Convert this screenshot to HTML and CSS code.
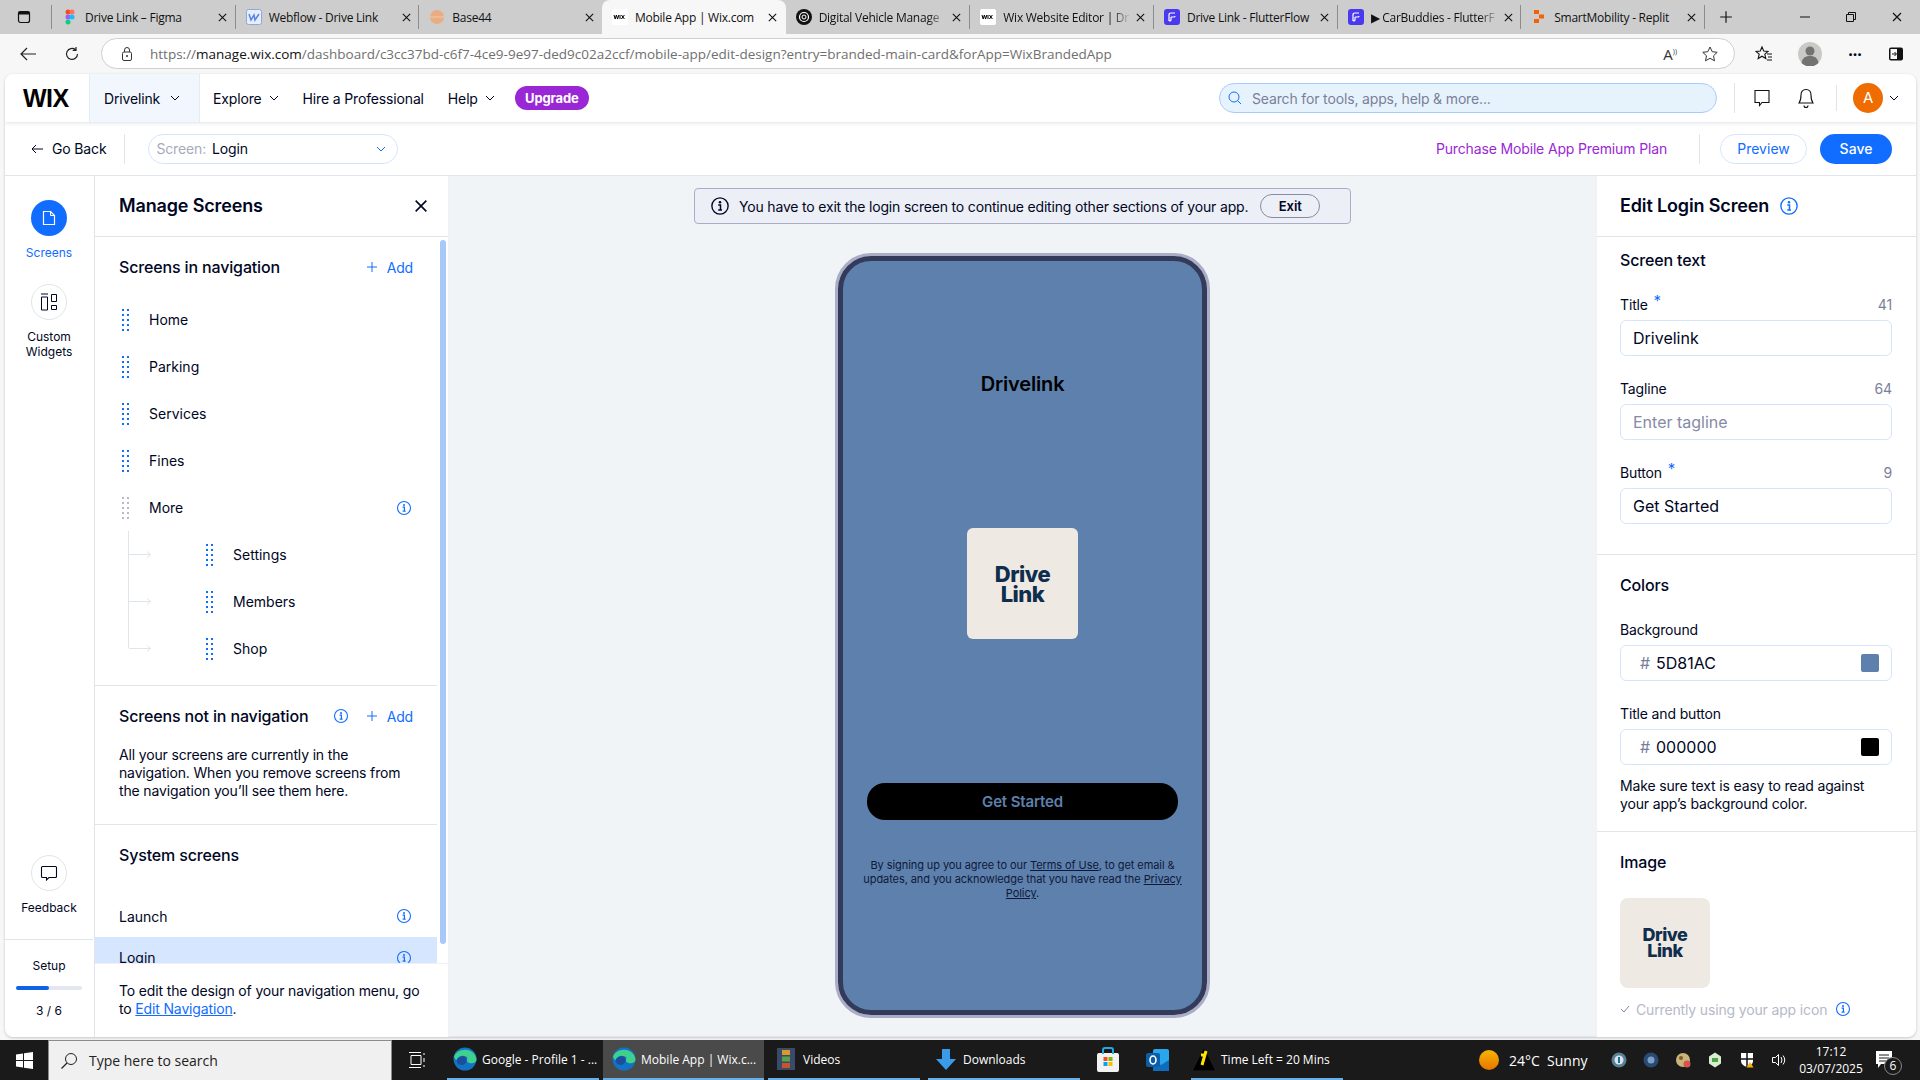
FILE: index.html
```html
<!DOCTYPE html>
<html lang="en">
<head>
    <meta charset="UTF-8">
    <title>Mobile App | Wix.com</title>
    <link rel="stylesheet" href="styles.css">
</head>
<body>

    <!-- Icons used more than once -->
    <svg class="sprite" width="0" height="0">
        <symbol id="i-close" viewBox="0 0 12 12"><path d="M2 2l8 8M10 2l-8 8" fill="none" stroke="currentColor" stroke-width="1.2"/></symbol>
        <symbol id="i-chevron" viewBox="0 0 10 6"><path d="M1 1l4 4 4-4" fill="none" stroke="currentColor" stroke-width="1"/></symbol>
        <symbol id="i-info" viewBox="0 0 16 16"><circle cx="8" cy="8" r="6.5" fill="none" stroke="currentColor" stroke-width="1.1"/><circle cx="8" cy="4.9" r="1" fill="currentColor"/><path d="M6.6 7.2H8.4V11M6.6 11.2H9.6" fill="none" stroke="currentColor" stroke-width="1.2"/></symbol>
        <symbol id="i-plus" viewBox="0 0 12 12"><path d="M6 1v10M1 6h10" fill="none" stroke="currentColor" stroke-width="1"/></symbol>
        <symbol id="i-dots" viewBox="0 0 7 22"><path d="M0 0h2v2H0zM5 0h2v2H5zM0 5h2v2H0zM5 5h2v2H5zM0 10h2v2H0zM5 10h2v2H5zM0 15h2v2H0zM5 15h2v2H5zM0 20h2v2H0zM5 20h2v2H5z" fill="currentColor"/></symbol>
        <symbol id="i-wix" viewBox="0 0 16 16"><rect width="16" height="16" rx="2" fill="#fff"/><path d="M2 6l1.2 4 1.2-4 1.2 4 1.2-4M8 6v4M9.4 6l3 4M12.4 6l-3 4" fill="none" stroke="#000" stroke-width="1"/></symbol>
        <symbol id="i-flutter" viewBox="0 0 16 16"><rect width="16" height="16" rx="3" fill="#4b39ef"/><path d="M5 12V6q0-2 2-2h4M7 8h3q1 0 1-1M7 8v3q0 1-2 1" fill="none" stroke="#fff" stroke-width="1.2"/></symbol>
        <symbol id="i-edge" viewBox="0 0 24 24">
            <circle cx="12" cy="12" r="11.5" fill="#1273c4"/>
            <path d="M1 10C3 1 21 -1 23.5 12c.3 3-3 5-7 4-3-1-3-3-2-5-2-3-8-3-10 1-1 2-2 1-3.500-2z" fill="#3fcf8e"/>
            <path d="M13 11c2 3-1 7-4 7-4 0-6-3-5-6 2-3 7-4 9-1z" fill="#1b4f9c"/>
        </symbol>
    </svg>

    <!-- Browser tabs -->
    <div class="tabstrip">
        <div class="tab-toggle"><svg width="14" height="14" viewBox="0 0 14 14"><rect x="1.500" y="1.500" width="11" height="11" rx="2" fill="none" stroke="#111" stroke-width="1.200"/><rect x="1.500" y="1.500" width="11" height="3" fill="#111"/></svg></div>
        <div class="tab">
            <svg class="favicon" viewBox="0 0 16 16"><circle cx="6" cy="3" r="2.500" fill="#f24e1e"/><circle cx="10" cy="3" r="2.500" fill="#ff7262"/><circle cx="6" cy="8" r="2.500" fill="#a259ff"/><circle cx="10" cy="8" r="2.500" fill="#1abcfe"/><circle cx="6" cy="13" r="2.500" fill="#0acf83"/></svg>
            <span class="tab-title">Drive Link – Figma</span>
            <svg class="tab-close"><use href="#i-close"/></svg>
        </div>
        <div class="tab">
            <svg class="favicon" viewBox="0 0 16 16"><rect x=".5" y=".5" width="15" height="15" rx="2" fill="#e6edfb" stroke="#8fa8dc"/><path d="M3 5l2 6 3-5 1 5 4-6" fill="none" stroke="#5a85e8" stroke-width="1.500"/></svg>
            <span class="tab-title">Webflow - Drive Link</span>
            <svg class="tab-close"><use href="#i-close"/></svg>
        </div>
        <div class="tab">
            <svg class="favicon" viewBox="0 0 16 16"><circle cx="8" cy="8" r="7" fill="#e9ad83"/><path d="M1 8h14" stroke="#f3c9a8"/></svg>
            <span class="tab-title">Base44</span>
            <svg class="tab-close"><use href="#i-close"/></svg>
        </div>
        <div class="tab tab-active">
            <svg class="favicon"><use href="#i-wix"/></svg>
            <span class="tab-title">Mobile App | Wix.com</span>
            <svg class="tab-close"><use href="#i-close"/></svg>
        </div>
        <div class="tab tab-plain">
            <svg class="favicon" viewBox="0 0 16 16"><circle cx="8" cy="8" r="8" fill="#111"/><circle cx="8" cy="8" r="4.500" fill="none" stroke="#fff" stroke-width="1.200"/><circle cx="8" cy="8" r="2" fill="none" stroke="#fff"/></svg>
            <span class="tab-title tab-fade">Digital Vehicle Manage</span>
            <svg class="tab-close"><use href="#i-close"/></svg>
        </div>
        <div class="tab">
            <svg class="favicon"><use href="#i-wix"/></svg>
            <span class="tab-title tab-fade">Wix Website Editor | Dr</span>
            <svg class="tab-close"><use href="#i-close"/></svg>
        </div>
        <div class="tab">
            <svg class="favicon"><use href="#i-flutter"/></svg>
            <span class="tab-title">Drive Link - FlutterFlow</span>
            <svg class="tab-close"><use href="#i-close"/></svg>
        </div>
        <div class="tab">
            <svg class="favicon"><use href="#i-flutter"/></svg>
            <span class="tab-title tab-fade">▶ CarBuddies - FlutterF</span>
            <svg class="tab-close"><use href="#i-close"/></svg>
        </div>
        <div class="tab">
            <svg class="favicon" viewBox="0 0 16 16"><rect x="3" y="1" width="5" height="4" fill="#f26207"/><rect x="8" y="5.500" width="5" height="4" fill="#f26207"/><rect x="3" y="10" width="5" height="4" fill="#f26207"/></svg>
            <span class="tab-title">SmartMobility - Replit</span>
            <svg class="tab-close"><use href="#i-close"/></svg>
        </div>
        <div class="tab-new"><svg width="14" height="14"><use href="#i-plus"/></svg></div>
        <div class="window-btns">
            <svg width="12" height="12" viewBox="0 0 12 12"><path d="M1 6h10" stroke="#111"/></svg>
            <svg width="12" height="12" viewBox="0 0 12 12"><path d="M3.500 3V1.500h7v7H9M1.500 3.500h7v7h-7z" fill="none" stroke="#111"/></svg>
            <svg width="12" height="12"><use href="#i-close"/></svg>
        </div>
    </div>

    <!-- Address bar -->
    <div class="addressrow">
        <svg class="nav-icon first" width="18" height="16" viewBox="0 0 18 16"><path d="M8 2L2 8l6 6M2 8h15" fill="none" stroke="#222" stroke-width="1.200"/></svg>
        <svg class="nav-icon" width="16" height="16" viewBox="0 0 16 16"><path d="M13.500 8a5.500 5.500 0 1 1-2-4.300M12 1v3.300H8.700" fill="none" stroke="#222" stroke-width="1.200"/></svg>
        <div class="urlbar">
            <svg width="12" height="16" viewBox="0 0 12 16"><rect x="1.500" y="6" width="9" height="8.500" rx="1.500" fill="none" stroke="#333"/><path d="M3.500 6V4a2.500 2.500 0 0 1 5 0v2" fill="none" stroke="#333"/><circle cx="6" cy="10" r="1" fill="#333"/></svg>
            <span class="url"><span class="url-dim">https://</span>manage.wix.com<span class="url-dim">/dashboard/c3cc37bd-c6f7-4ce9-9e97-ded9c02a2ccf/mobile-app/edit-design?entry=branded-main-card&amp;forApp=WixBrandedApp</span></span>
            <span class="url-read">A<sup>))</sup></span>
            <svg width="18" height="18" viewBox="0 0 18 18"><path d="M9 2l2.200 4.700 5 .6-3.700 3.500 1 5L9 13.300l-4.500 2.500 1-5L1.800 7.300l5-.6z" fill="none" stroke="#333"/></svg>
        </div>
        <div class="browser-tools">
            <svg width="18" height="18" viewBox="0 0 18 18"><path d="M7 2l1.700 4 4.300.4-3.200 2.800 1 4.300L7 11.200 3.200 13.500l1-4.300L1 6.400 5.300 6zM12 9h5M13 12h4M12 15h5" fill="none" stroke="#111" stroke-width="1.100"/></svg>
            <svg width="24" height="24" viewBox="0 0 24 24"><circle cx="12" cy="12" r="12" fill="#c9c9c6"/><circle cx="12" cy="9" r="4.500" fill="#737373"/><path d="M3.500 21c1-6 4.500-7 8.500-7s7.500 1 8.500 7a12 12 0 0 1-17 0z" fill="#737373"/></svg>
            <span class="more-dots">···</span>
            <svg width="16" height="16" viewBox="0 0 16 16"><rect x="1" y="1.500" width="14" height="13" rx="2" fill="#111"/><rect x="2.500" y="3" width="6.500" height="10" fill="#f7f7f7"/><path d="M4 8h4M6.500 6l2 2-2 2" fill="none" stroke="#111"/></svg>
        </div>
    </div>

    <!-- Wix window -->
    <div class="app">
        <header class="wixbar">
            <div class="wix-logo">WIX</div>
            <div class="site-pick">Drivelink <svg class="chev"><use href="#i-chevron"/></svg></div>
            <div class="wix-link explore">Explore <svg class="chev"><use href="#i-chevron"/></svg></div>
            <div class="wix-link hire">Hire a Professional</div>
            <div class="wix-link help">Help <svg class="chev"><use href="#i-chevron"/></svg></div>
            <div class="upgrade">Upgrade</div>
            <div class="search">
                <svg width="16" height="16" viewBox="0 0 16 16"><circle cx="7" cy="7" r="5" fill="none" stroke="#116dff"/><path d="M10.700 10.700L14 14" stroke="#116dff"/></svg>
                <span>Search for tools, apps, help &amp; more...</span>
            </div>
            <div class="wix-tools">
                <svg width="20" height="20" viewBox="0 0 20 20"><path d="M3 2.500h14v12h-7l-2.500 3v-3H3z" fill="none" stroke="#111" stroke-width="1.100"/></svg>
                <svg width="20" height="22" viewBox="0 0 20 22"><path d="M10 2.500c-3.500 0-5 2.500-5 5.500 0 3.500-.5 6-2 8h14c-1.500-2-2-4.500-2-8 0-3-1.500-5.500-5-5.500zM8 18.500a2 2 0 0 0 4 0" fill="none" stroke="#111" stroke-width="1.100"/></svg>
                <span class="tool-sep"></span>
                <div class="avatar">A</div>
                <svg class="chev"><use href="#i-chevron"/></svg>
            </div>
        </header>

        <div class="toolbar">
            <div class="go-back">
                <svg width="13" height="10" viewBox="0 0 13 10"><path d="M5 1L1 5l4 4M1 5h11" fill="none" stroke="#000624"/></svg>
                Go Back
            </div>
            <div class="screen-pick">
                <span class="screen-label">Screen:</span>
                <span class="screen-value">Login</span>
                <svg class="chev blue"><use href="#i-chevron"/></svg>
            </div>
            <a class="purchase">Purchase Mobile App Premium Plan</a>
            <button class="btn-preview">Preview</button>
            <button class="btn-save">Save</button>
        </div>

        <div class="workspace">
            <!-- Left rail -->
            <nav class="rail">
                <div class="rail-circle active">
                    <svg width="14" height="16" viewBox="0 0 14 16"><path d="M1.500 1.500h7l4 4v9h-11z" fill="none" stroke="#fff" stroke-width="1.200"/><path d="M8.500 1.500v4h4" fill="none" stroke="#fff"/></svg>
                </div>
                <div class="rail-label blue-text">Screens</div>
                <div class="rail-circle second">
                    <svg width="18" height="18" viewBox="0 0 18 18"><path d="M1 1h7" stroke="#000624"/><path d="M1.500 4h6v13h-6zM11.500 1.500h5v7h-5zM11.500 12.500h5v4h-5z" fill="none" stroke="#000624"/></svg>
                </div>
                <div class="rail-label">Custom<br>Widgets</div>

                <div class="rail-circle feedback">
                    <svg width="18" height="18" viewBox="0 0 18 18"><path d="M2.500 2.500h13a1 1 0 0 1 1 1v9a1 1 0 0 1-1 1H9L6.500 16v-2.500h-4a1 1 0 0 1-1-1v-9a1 1 0 0 1 1-1z" fill="none" stroke="#000624" stroke-width="1.100"/></svg>
                </div>
                <div class="rail-label">Feedback</div>

                <div class="setup">
                    <div class="setup-title">Setup</div>
                    <div class="setup-bar"><div class="setup-fill" style="width: 50%"></div></div>
                    <div class="setup-count">3 / 6</div>
                </div>
            </nav>

            <!-- Manage screens panel -->
            <aside class="manage">
                <div class="panel-head">
                    <h2>Manage Screens</h2>
                    <svg class="panel-close"><use href="#i-close"/></svg>
                </div>
                <div class="manage-scroll">
                    <div class="manage-content">
                        <section class="nav-section">
                            <div class="section-head">
                                <h3>Screens in navigation</h3>
                                <a class="add"><svg><use href="#i-plus"/></svg>Add</a>
                            </div>
                            <div class="row"><svg class="dots"><use href="#i-dots"/></svg>Home</div>
                            <div class="row"><svg class="dots"><use href="#i-dots"/></svg>Parking</div>
                            <div class="row"><svg class="dots"><use href="#i-dots"/></svg>Services</div>
                            <div class="row"><svg class="dots"><use href="#i-dots"/></svg>Fines</div>
                            <div class="row"><svg class="dots grey"><use href="#i-dots"/></svg>More<svg class="info row-info"><use href="#i-info"/></svg></div>
                            <div class="row sub">
                                <svg class="branch" viewBox="0 0 87 47"><path d="M9.500 0V47M9.500 23.500H32M28 20.500l3.500 3-3.500 3" fill="none" stroke="#dfe5eb"/></svg>
                                <svg class="dots"><use href="#i-dots"/></svg>Settings
                            </div>
                            <div class="row sub">
                                <svg class="branch" viewBox="0 0 87 47"><path d="M9.500 0V47M9.500 23.500H32M28 20.500l3.500 3-3.500 3" fill="none" stroke="#dfe5eb"/></svg>
                                <svg class="dots"><use href="#i-dots"/></svg>Members
                            </div>
                            <div class="row sub">
                                <svg class="branch" viewBox="0 0 87 47"><path d="M9.500 0V22q0 1.500 1.500 1.500H32M28 20.500l3.500 3-3.500 3" fill="none" stroke="#dfe5eb"/></svg>
                                <svg class="dots"><use href="#i-dots"/></svg>Shop
                            </div>
                        </section>

                        <section class="hidden-section">
                            <div class="section-title-row">
                                <h3>Screens not in navigation</h3>
                                <svg class="info"><use href="#i-info"/></svg>
                                <a class="add"><svg><use href="#i-plus"/></svg>Add</a>
                            </div>
                            <p>All your screens are currently in the navigation. When you remove screens from the navigation you’ll see them here.</p>
                        </section>

                        <section class="system-section">
                            <h3>System screens</h3>
                            <div class="sys-row launch">Launch<svg class="info"><use href="#i-info"/></svg></div>
                            <div class="sys-row selected">Login<svg class="info"><use href="#i-info"/></svg></div>
                        </section>
                    </div>
                    <div class="scrollbar"></div>
                </div>
                <div class="manage-foot">To edit the design of your navigation menu, go to <a>Edit Navigation</a>.</div>
            </aside>

            <!-- Phone preview -->
            <main class="canvas">
                <div class="banner">
                    <svg width="20" height="20"><use href="#i-info"/></svg>
                    <span>You have to exit the login screen to continue editing other sections of your app.</span>
                    <button class="btn-exit">Exit</button>
                </div>
                <div class="phone">
                    <div class="phone-screen">
                        <div class="phone-title">Drivelink</div>
                        <div class="logo-box">
                            <div class="logo-text">Drive<br>Link</div>
                        </div>
                        <div class="phone-btn">Get Started</div>
                        <div class="phone-terms">By signing up you agree to our <u>Terms of Use</u>, to get email &amp; updates, and you acknowledge that you have read the <u>Privacy Policy</u>.</div>
                    </div>
                </div>
            </main>

            <!-- Edit panel -->
            <aside class="edit">
                <div class="panel-head">
                    <h2>Edit Login Screen</h2>
                    <svg class="head-info"><use href="#i-info"/></svg>
                </div>
                <section class="edit-section">
                    <h3>Screen text</h3>
                    <div class="field first">
                        <div class="field-label"><span>Title <b>*</b></span><span class="count">41</span></div>
                        <div class="input">Drivelink</div>
                    </div>
                    <div class="field">
                        <div class="field-label"><span>Tagline</span><span class="count">64</span></div>
                        <div class="input placeholder">Enter tagline</div>
                    </div>
                    <div class="field">
                        <div class="field-label"><span>Button <b>*</b></span><span class="count">9</span></div>
                        <div class="input">Get Started</div>
                    </div>
                </section>
                <section class="edit-section colors">
                    <h3>Colors</h3>
                    <div class="field first">
                        <div class="field-label"><span>Background</span></div>
                        <div class="input color"><i>#</i>5D81AC<span class="swatch" style="background: #5d81ac"></span></div>
                    </div>
                    <div class="field">
                        <div class="field-label"><span>Title and button</span></div>
                        <div class="input color"><i>#</i>000000<span class="swatch" style="background: #000000"></span></div>
                    </div>
                    <p>Make sure text is easy to read against your app’s background color.</p>
                </section>
                <section class="edit-section image">
                    <h3>Image</h3>
                    <div class="thumb"><div class="logo-text small">Drive<br>Link</div></div>
                    <div class="using">
                        <svg width="10" height="8" viewBox="0 0 10 8"><path d="M1 4l3 3 5-6" fill="none" stroke="#868aa5"/></svg>
                        <span>Currently using your app icon</span>
                        <svg class="info"><use href="#i-info"/></svg>
                    </div>
                </section>
            </aside>
        </div>
    </div>

    <!-- Windows taskbar -->
    <footer class="taskbar">
        <div class="start"><svg width="17" height="17" viewBox="0 0 17 17"><path d="M0 2.400l7-1V8H0zM8 1.200L17 0v8H8zM0 9h7v6.600l-7-1zM8 9h9v8l-9-1.200z" fill="#fff"/></svg></div>
        <div class="task-search">
            <svg width="18" height="18" viewBox="0 0 18 18"><circle cx="11" cy="7" r="5.500" fill="none" stroke="#222"/><path d="M7 11l-5.500 5.500" stroke="#222" stroke-width="1.300"/></svg>
            <span>Type here to search</span>
        </div>
        <div class="task-view"><svg width="18" height="18" viewBox="0 0 18 18"><path d="M3 4.500h10v9H3zM1 1.500h12M1 16.500h12M16 2v2M16 7v4M16 14v2" fill="none" stroke="#fff"/></svg></div>
        <div class="task-item open"><svg class="task-icon"><use href="#i-edge"/></svg>Google - Profile 1 - ...</div>
        <div class="task-item open current"><svg class="task-icon"><use href="#i-edge"/></svg>Mobile App | Wix.c...</div>
        <div class="task-item open videos"><svg class="task-icon" viewBox="0 0 24 24"><rect x="3" y="1" width="18" height="22" fill="#3a4a6b"/><rect x="8" y="3" width="8" height="5" fill="#d79a2b"/><rect x="8" y="9.500" width="8" height="5" fill="#5aa04a"/><rect x="8" y="16" width="8" height="5" fill="#c4552d"/></svg>Videos</div>
        <div class="task-item open"><svg class="task-icon" viewBox="0 0 24 24"><path d="M8 2h8v10h6L12 23 2 12h6z" fill="#3a9be8"/></svg>Downloads</div>
        <div class="task-app store"><svg width="24" height="26" viewBox="0 0 24 26"><rect x="1" y="6" width="22" height="19" rx="2" fill="#f2f2f2"/><path d="M7 7V3q0-2 2-2h6q2 0 2 2v4" fill="none" stroke="#28a8e0" stroke-width="2"/><rect x="7.500" y="10" width="4" height="4" fill="#f25022"/><rect x="12.500" y="10" width="4" height="4" fill="#7fba00"/><rect x="7.500" y="15" width="4" height="4" fill="#00a4ef"/><rect x="12.500" y="15" width="4" height="4" fill="#ffb900"/></svg></div>
        <div class="task-app"><svg width="26" height="26" viewBox="0 0 26 26"><rect x="8" y="2" width="16" height="22" rx="2" fill="#28a8ea"/><path d="M8 13l8 5 8-5v11H8z" fill="#0f6cbd"/><rect x="1" y="6" width="14" height="14" rx="2" fill="#0a5ea8"/><ellipse cx="8" cy="13" rx="3" ry="4" fill="none" stroke="#fff" stroke-width="1.600"/></svg></div>
        <div class="task-item open timer"><svg class="task-icon" viewBox="0 0 24 24"><path d="M12 0l12 24H0z" fill="#000" stroke="#222"/><path d="M14 4l-4 14M9 8h5" stroke="#ffe600" stroke-width="3" fill="none"/></svg>Time Left = 20 Mins</div>
        <div class="weather">
            <span class="sun"></span>
            <span>24°C&nbsp; Sunny</span>
        </div>
        <div class="tray">
            <svg viewBox="0 0 16 16"><circle cx="8" cy="8" r="7.500" fill="#5b7f93"/><circle cx="8" cy="8" r="4.500" fill="#d7e6ee"/><path d="M8 5v6" stroke="#1f6f9c" stroke-width="2"/></svg>
            <svg viewBox="0 0 16 16"><circle cx="8" cy="8" r="7.500" fill="#2b4a73"/><circle cx="8" cy="8" r="3.500" fill="#7ea0c8"/></svg>
            <svg viewBox="0 0 16 16"><circle cx="8" cy="8" r="7" fill="#c9b47a"/><circle cx="6" cy="6" r="2" fill="#7a5c2e"/><circle cx="12" cy="12" r="3.500" fill="#d9534f"/></svg>
            <svg viewBox="0 0 16 16"><path d="M8 .5l6 4v7l-6 4-6-4v-7z" fill="#d9eed0"/><path d="M5 6h6v4H5z" fill="#4fa14a"/></svg>
            <svg viewBox="0 0 16 16"><path d="M2 1h12v8q0 4-6 6-6-2-6-6z" fill="#fff"/><path d="M8 1v14M2 7h12" stroke="#111" stroke-width="1.500"/><path d="M11 10l3.500 5.500h-7z" fill="#f5b400"/></svg>
            <svg viewBox="0 0 16 16"><path d="M1.500 5.500h3l3-3v11l-3-3h-3zM10 5q2 3 0 6M12 3.500q3.500 4.500 0 9" fill="none" stroke="#fff"/></svg>
        </div>
        <div class="clock">17:12<br>03/07/2025</div>
        <div class="notify">
            <svg width="16" height="18" viewBox="0 0 16 18"><path d="M0 0h16v13H5l-3 4v-4H0z" fill="#fff"/><path d="M3 4h10M3 7h10M3 10h7" stroke="#1a1a1a"/></svg>
            <span class="notify-count">6</span>
        </div>
    </footer>

</body>
</html>
```

FILE: styles.css
```css
* {
    box-sizing: border-box;
}

html, body {
    height: 1080px;
}

body {
    margin: 0;
    display: flex;
    flex-direction: column;
    overflow: hidden;
    font-family: Inter, "Noto Sans", sans-serif;
    font-size: 14px;
    letter-spacing: -0.15px;
    color: #000624;
    background-color: #f7f7f7;
}

h2, h3, p {
    margin: 0;
}

.sprite {
    position: absolute;
}

/* Browser tabs */
.tabstrip {
    display: flex;
    flex: none;
    height: 34px;
    background-color: #cdcdcd;
    font-family: "Open Sans", "Noto Sans", sans-serif;
    font-size: 12px;
    letter-spacing: -0.25px;
    color: #111;
}

.tab-toggle {
    display: flex;
    align-items: center;
    justify-content: center;
    width: 51px;
    padding-right: 4px;
}

.tab {
    display: flex;
    align-items: center;
    width: 183.67px;
    height: 24px;
    margin-top: 5px;
    padding-left: 10px;
    border-left: 1px solid #8c8c8c;
}

.tab-plain,
.tab-active {
    border-left: none;
}

.tab-active {
    height: 34px;
    margin-top: 0;
    background-color: #f7f7f7;
    border-radius: 8px 8px 0 0;
}

.favicon {
    flex: none;
    width: 16px;
    height: 16px;
    margin-right: 7px;
}

.tab-title {
    width: 128px;
    overflow: hidden;
    white-space: nowrap;
}

.tab-fade {
    -webkit-mask-image: linear-gradient(90deg, #000 85%, transparent);
    mask-image: linear-gradient(90deg, #000 85%, transparent);
}

.tab-close {
    flex: none;
    width: 11px;
    height: 11px;
    margin-left: 4px;
}

.tab-new {
    display: flex;
    align-items: center;
    justify-content: center;
    width: 44px;
    height: 24px;
    margin-top: 5px;
    border-left: 1px solid #8c8c8c;
}

.window-btns {
    display: flex;
    gap: 34px;
    align-items: center;
    margin-left: auto;
    padding-right: 17px;
}

/* Address bar */
.addressrow {
    display: flex;
    flex: none;
    align-items: center;
    height: 40px;
    padding: 1px 0 2px;
    font-family: "Open Sans", "Noto Sans", sans-serif;
    font-size: 13.5px;
    letter-spacing: 0;
}

.nav-icon.first {
    margin: 0 27px 0 19px;
}

.urlbar {
    display: flex;
    align-items: center;
    width: 1634px;
    height: 31px;
    margin-left: 21px;
    padding: 0 15px 0 19px;
    background-color: #fff;
    border: 1px solid #cfcfcf;
    border-radius: 16px;
}

.url {
    flex: 1;
    margin-left: 17px;
    color: #111;
    white-space: nowrap;
}

.url-dim {
    color: #6f6f6f;
}

.url-read {
    margin-right: 24px;
    font-size: 15px;
    color: #333;
}

.url-read sup {
    font-size: 7px;
}

.browser-tools {
    display: flex;
    align-items: center;
    margin-left: 20px;
    gap: 25px;
}

.more-dots {
    width: 16px;
    font-size: 16px;
    font-weight: 700;
    text-align: center;
}

/* Wix window */
.app {
    display: flex;
    flex: none;
    flex-direction: column;
    height: 963px;
    margin: 0 4px 3px 5px;
    background-color: #fff;
    border-radius: 8px;
    overflow: hidden;
    box-shadow: 0 1px 3px rgba(0, 0, 0, 0.2);
}

.wixbar {
    display: flex;
    flex: none;
    align-items: center;
    height: 48px;
    box-shadow: 0 1px 4px rgba(22, 45, 61, 0.14);
    position: relative;
    font-size: 14px;
}

.wix-logo {
    width: 84px;
    padding-left: 18px;
    font-family: "Liberation Sans", sans-serif;
    font-size: 25px;
    font-weight: 700;
    letter-spacing: -0.5px;
    color: #000;
}

.site-pick {
    display: flex;
    align-items: center;
    width: 111px;
    height: 48px;
    padding-left: 14px;
    gap: 10px;
    background-color: #f2f7fd;
    border-left: 1px solid #e3ecf6;
    border-right: 1px solid #e3ecf6;
}

.chev {
    width: 10px;
    height: 6px;
    flex: none;
}

.chev.blue {
    color: #116dff;
}

.wix-link {
    display: flex;
    align-items: center;
    gap: 7px;
}

.explore {
    margin-left: 13px;
}

.hire {
    margin-left: 24px;
}

.help {
    margin-left: 24px;
}

.upgrade {
    width: 74px;
    height: 24px;
    margin-left: 20px;
    font-size: 13px;
    font-weight: 700;
    line-height: 24px;
    text-align: center;
    color: #fff;
    background-color: #9a27d5;
    border-radius: 12px;
}

.search {
    display: flex;
    align-items: center;
    gap: 9px;
    width: 498px;
    height: 30px;
    margin-left: auto;
    padding-left: 7px;
    color: #7a7f99;
    background-color: #e7f3fc;
    border: 1px solid #a8caff;
    border-radius: 15px;
}

.wix-tools {
    display: flex;
    align-items: center;
    margin-left: 17px;
    padding-left: 17px;
    border-left: 1px solid #dfe5eb;
    margin-right: 17px;
}

.wix-tools svg + svg {
    margin-left: 24px;
}

.tool-sep {
    width: 1px;
    height: 26px;
    margin-left: 20px;
    background-color: #dfe5eb;
}

.avatar {
    width: 30px;
    height: 30px;
    margin-left: 16px;
    margin-right: 6px;
    font-size: 15px;
    line-height: 30px;
    text-align: center;
    color: #fff;
    background-color: #ee6c00;
    border-radius: 50%;
}

.toolbar {
    display: flex;
    flex: none;
    align-items: center;
    height: 54px;
    padding-left: 26px;
    border-bottom: 1px solid #dfe5eb;
}

.go-back {
    display: flex;
    align-items: center;
    gap: 8px;
    height: 30px;
    padding-right: 18px;
    border-right: 1px solid #dfe5eb;
}

.screen-pick {
    display: flex;
    align-items: center;
    width: 250px;
    height: 30px;
    margin-left: 23px;
    padding: 0 11px 0 7px;
    background-color: #fff;
    border: 1px solid #d5e4fb;
    border-radius: 15px;
}

.screen-label {
    color: #a8abbd;
}

.screen-value {
    margin-left: 6px;
}

.screen-pick .chev {
    margin-left: auto;
}

.purchase {
    margin-left: auto;
    padding-right: 32px;
    color: #9a27d5;
    border-right: 1px solid #dfe5eb;
    line-height: 30px;
}

.btn-preview,
.btn-save {
    height: 30px;
    font-family: inherit;
    font-size: 14px;
    border-radius: 15px;
}

.btn-preview {
    width: 87px;
    margin-left: 20px;
    color: #116dff;
    background-color: #fff;
    border: 1px solid #d5e4fb;
}

.btn-save {
    width: 72px;
    margin: 0 24px 0 13px;
    font-weight: 500;
    color: #fff;
    background-color: #116dff;
    border: none;
}

.workspace {
    display: grid;
    flex: 1;
    grid-template-columns: 90px 354px 1fr 320px;
    grid-template-rows: minmax(0, 1fr);
    min-height: 0;
}

/* Left rail */
.rail {
    display: flex;
    flex-direction: column;
    align-items: center;
    padding: 24px 1px 0 0;
    border-right: 1px solid #dfe5eb;
    font-size: 12px;
    letter-spacing: 0;
}

.rail-circle {
    display: flex;
    align-items: center;
    justify-content: center;
    flex: none;
    width: 36px;
    height: 36px;
    border: 1px solid #dfe5eb;
    border-radius: 50%;
}

.rail-circle.active {
    background-color: #116dff;
    border: none;
}

.rail-circle.second {
    margin-top: 24px;
}

.rail-circle.feedback {
    margin-top: auto;
}

.rail-label {
    margin-top: 9px;
    line-height: 15px;
    text-align: center;
}

.blue-text {
    color: #116dff;
}

.setup {
    display: flex;
    flex-direction: column;
    align-items: center;
    width: 100%;
    height: 98px;
    margin-top: 24px;
    padding-top: 18px;
    border-top: 1px solid #dfe5eb;
}

.setup-title {
    line-height: 16px;
}

.setup-bar {
    width: 66px;
    height: 4px;
    margin-top: 12px;
    background-color: #e3e6ee;
    border-radius: 2px;
}

.setup-fill {
    height: 4px;
    background-color: #0f62e6;
    border-radius: 2px;
}

.setup-count {
    margin-top: 13px;
    line-height: 16px;
}

/* Panels */
.panel-head {
    display: flex;
    align-items: center;
    height: 61px;
    padding-left: 24px;
    border-bottom: 1px solid #dfe5eb;
}

.panel-head h2 {
    font-size: 18px;
    font-weight: 600;
    line-height: 24px;
}

.manage {
    display: flex;
    flex-direction: column;
    border-right: 1px solid #eef1f5;
    min-height: 0;
}

.panel-close {
    width: 16px;
    height: 16px;
    margin-left: auto;
    margin-right: 19px;
}

.manage-scroll {
    display: flex;
    flex: 1;
    min-height: 0;
    overflow: hidden;
}

.manage-content {
    flex: none;
    width: 342px;
}

.scrollbar {
    flex: none;
    width: 6px;
    height: 704px;
    margin: 3px 0 0 3px;
    background-color: #a8c8fa;
    border-radius: 3px;
}

h3 {
    font-size: 16px;
    font-weight: 500;
    line-height: 24px;
}

.nav-section {
    height: 449px;
    border-bottom: 1px solid #dfe5eb;
}

.section-head {
    display: flex;
    justify-content: space-between;
    height: 59px;
    padding: 18px 24px 0 24px;
}

.add {
    display: flex;
    align-items: center;
    height: 24px;
    color: #116dff;
    font-size: 14px;
}

.add svg {
    width: 12px;
    height: 12px;
    margin-right: 9px;
}

.row {
    position: relative;
    display: flex;
    align-items: center;
    height: 47px;
    padding-left: 24px;
    letter-spacing: 0;
}

.dots {
    flex: none;
    width: 7px;
    height: 22px;
    margin-left: 3px;
    margin-right: 20px;
    color: #116dff;
}

.dots.grey {
    color: #b6b9c8;
}

.info {
    flex: none;
    width: 16px;
    height: 16px;
    color: #116dff;
}

.row-info {
    margin-left: auto;
    margin-right: 25px;
}

.branch {
    flex: none;
    width: 87px;
    height: 47px;
}

.row.sub .dots {
    margin-left: 0;
}

.hidden-section {
    height: 139px;
    padding: 18px 24px 0 24px;
    border-bottom: 1px solid #dfe5eb;
}

.section-title-row {
    display: flex;
    align-items: center;
    height: 24px;
}

.section-title-row .info {
    margin-left: auto;
    margin-right: 17px;
}

.hidden-section p {
    margin-top: 18px;
    line-height: 18px;
}

.system-section {
    padding-top: 18px;
}

.system-section h3 {
    padding-left: 24px;
}

.sys-row {
    display: flex;
    align-items: center;
    justify-content: space-between;
    height: 41px;
    padding: 0 25px 0 24px;
    letter-spacing: 0;
}

.launch {
    height: 40px;
    margin-top: 30px;
    padding-bottom: 2px;
}

.selected {
    background-color: #d6e6fe;
}

.manage-foot {
    flex: none;
    height: 74px;
    padding: 18px 20px 0 24px;
    line-height: 18px;
    background-color: #fff;
    border-top: 1px solid #eef1f5;
}

.manage-foot a {
    color: #116dff;
    text-decoration: underline;
}

/* Phone preview */
.canvas {
    display: flex;
    flex-direction: column;
    align-items: center;
    background-color: #f0f4f7;
    border-bottom: 1px solid #dfe5eb;
}

.banner {
    display: flex;
    align-items: center;
    width: 657px;
    height: 36px;
    margin-top: 12px;
    padding-left: 15px;
    letter-spacing: -0.18px;
    background-color: #eceff5;
    border: 1px solid #a9adc9;
    border-radius: 4px;
}

.banner span {
    margin-left: 9px;
}

.btn-exit {
    width: 60px;
    height: 24px;
    margin-left: 12px;
    font-family: inherit;
    font-size: 13px;
    font-weight: 600;
    color: #000624;
    background: transparent;
    border: 1px solid #868aa5;
    border-radius: 12px;
}

.phone {
    width: 375px;
    height: 765px;
    margin-top: 29px;
    border: 3px solid #a9adc6;
    border-radius: 36px;
}

.phone-screen {
    display: flex;
    flex-direction: column;
    align-items: center;
    height: 100%;
    background-color: #5d81ac;
    border: 5px solid #343a5a;
    border-radius: 33px;
}

.phone-title {
    margin-top: 108px;
    font-size: 20px;
    font-weight: 600;
    line-height: 30px;
    color: #000;
}

.logo-box,
.thumb {
    display: flex;
    align-items: center;
    justify-content: center;
    background-color: #eee9e2;
}

.logo-box {
    width: 111px;
    height: 111px;
    margin-top: 129px;
    border-radius: 6px;
}

.logo-text {
    font-size: 22px;
    font-weight: 800;
    line-height: 20px;
    letter-spacing: -0.5px;
    text-align: center;
    color: #0f2e4d;
}

.logo-text.small {
    font-size: 18px;
    line-height: 16px;
}

.phone-btn {
    width: 311px;
    height: 37px;
    margin-top: 144px;
    font-size: 15px;
    font-weight: 600;
    line-height: 37px;
    text-align: center;
    color: #5d81ac;
    background-color: #000;
    border-radius: 18px;
}

.phone-terms {
    width: 325px;
    margin-top: 38px;
    font-size: 11px;
    line-height: 14px;
    letter-spacing: -0.08px;
    text-align: center;
    color: #10183a;
}

/* Edit panel */
.edit {
    border-left: 1px solid #eef1f5;
}

.edit .panel-head {
    padding-left: 23px;
}

.head-info {
    width: 20px;
    height: 20px;
    margin-left: 10px;
    color: #116dff;
}

.edit-section {
    padding: 11px 24px 30px 23px;
    border-bottom: 1px solid #dfe5eb;
}

.field {
    margin-top: 24px;
}

.field-label {
    display: flex;
    justify-content: space-between;
    height: 18px;
    margin-bottom: 6px;
    line-height: 18px;
}

.field-label b {
    margin-left: 2px;
    font-size: 15px;
    font-weight: 400;
    line-height: 0;
    vertical-align: 4px;
    color: #116dff;
}

.count {
    color: #7a7f99;
}

.input {
    display: flex;
    align-items: center;
    height: 36px;
    padding-left: 12px;
    font-size: 16px;
    letter-spacing: 0;
    background-color: #fff;
    border: 1px solid #d5e4fb;
    border-radius: 6px;
}

.placeholder {
    color: #868aa5;
}

.input.color {
    padding-right: 12px;
}

.input i {
    width: 23px;
    padding-left: 7px;
    font-style: normal;
    color: #7a7f99;
}

.swatch {
    width: 18px;
    height: 18px;
    margin-left: auto;
    border-radius: 2px;
}

.colors {
    padding-top: 18px;
    padding-bottom: 18px;
}

.colors p {
    margin-top: 12px;
    line-height: 18px;
}

.image {
    padding-top: 18px;
    border-bottom: none;
}

.thumb {
    width: 90px;
    height: 90px;
    margin-top: 24px;
    border-radius: 8px;
}

.using {
    display: flex;
    align-items: center;
    height: 18px;
    margin-top: 12px;
    color: #b6b9c8;
}

.using span {
    margin-left: 6px;
}

.using .info {
    margin-left: 8px;
}

/* Windows taskbar */
.taskbar {
    display: flex;
    flex: none;
    align-items: stretch;
    height: 40px;
    font-family: "Open Sans", "Noto Sans", sans-serif;
    font-size: 12px;
    letter-spacing: 0;
    color: #fff;
    background-color: #1a1a1a;
}

.start {
    display: flex;
    align-items: center;
    justify-content: center;
    width: 48px;
}

.task-search {
    display: flex;
    align-items: center;
    gap: 11px;
    width: 344px;
    padding-left: 11px;
    font-size: 14px;
    color: #222;
    background-color: #f0f0f0;
    border: 1px solid #8c8c8c;
    border-bottom: none;
}

.task-view {
    display: flex;
    align-items: center;
    justify-content: center;
    width: 55px;
    padding-right: 6px;
}

.task-item {
    display: flex;
    align-items: center;
    width: 152px;
    margin-right: 4px;
    padding-left: 6px;
    gap: 5px;
    white-space: nowrap;
}

.task-item.current {
    width: 161px;
    padding-left: 9px;
    background-color: #4a4a4a;
}

.task-item.videos {
    margin-right: 8px;
}

.open {
    border-bottom: 2px solid #66afe9;
}

.task-icon {
    flex: none;
    width: 24px;
    height: 24px;
}

.task-app {
    display: flex;
    align-items: center;
    justify-content: center;
    width: 50px;
}

.store {
    margin-left: -1px;
}

.timer {
    margin-left: 8px;
    margin-right: 0;
    padding-left: 1px;
}

.weather {
    display: flex;
    align-items: center;
    flex: none;
    width: 106px;
    gap: 10px;
    margin-left: 136px;
    font-size: 14px;
    white-space: nowrap;
}

.sun {
    flex: none;
    width: 20px;
    height: 20px;
    background: linear-gradient(180deg, #f7b500, #e87400);
    border-radius: 50%;
}

.tray {
    display: flex;
    align-items: center;
    gap: 16px;
    margin-left: 26px;
}

.tray svg {
    width: 16px;
    height: 16px;
}

.clock {
    width: 80px;
    margin-left: 4px;
    padding-top: 3px;
    line-height: 17px;
    text-align: center;
}

.notify {
    position: relative;
    display: flex;
    align-items: center;
    margin-left: 5px;
}

.notify-count {
    position: absolute;
    left: 8px;
    top: 17px;
    width: 18px;
    height: 18px;
    font-size: 12px;
    line-height: 16px;
    text-align: center;
    background-color: #1a1a1a;
    border: 1px solid #888;
    border-radius: 50%;
}
```
